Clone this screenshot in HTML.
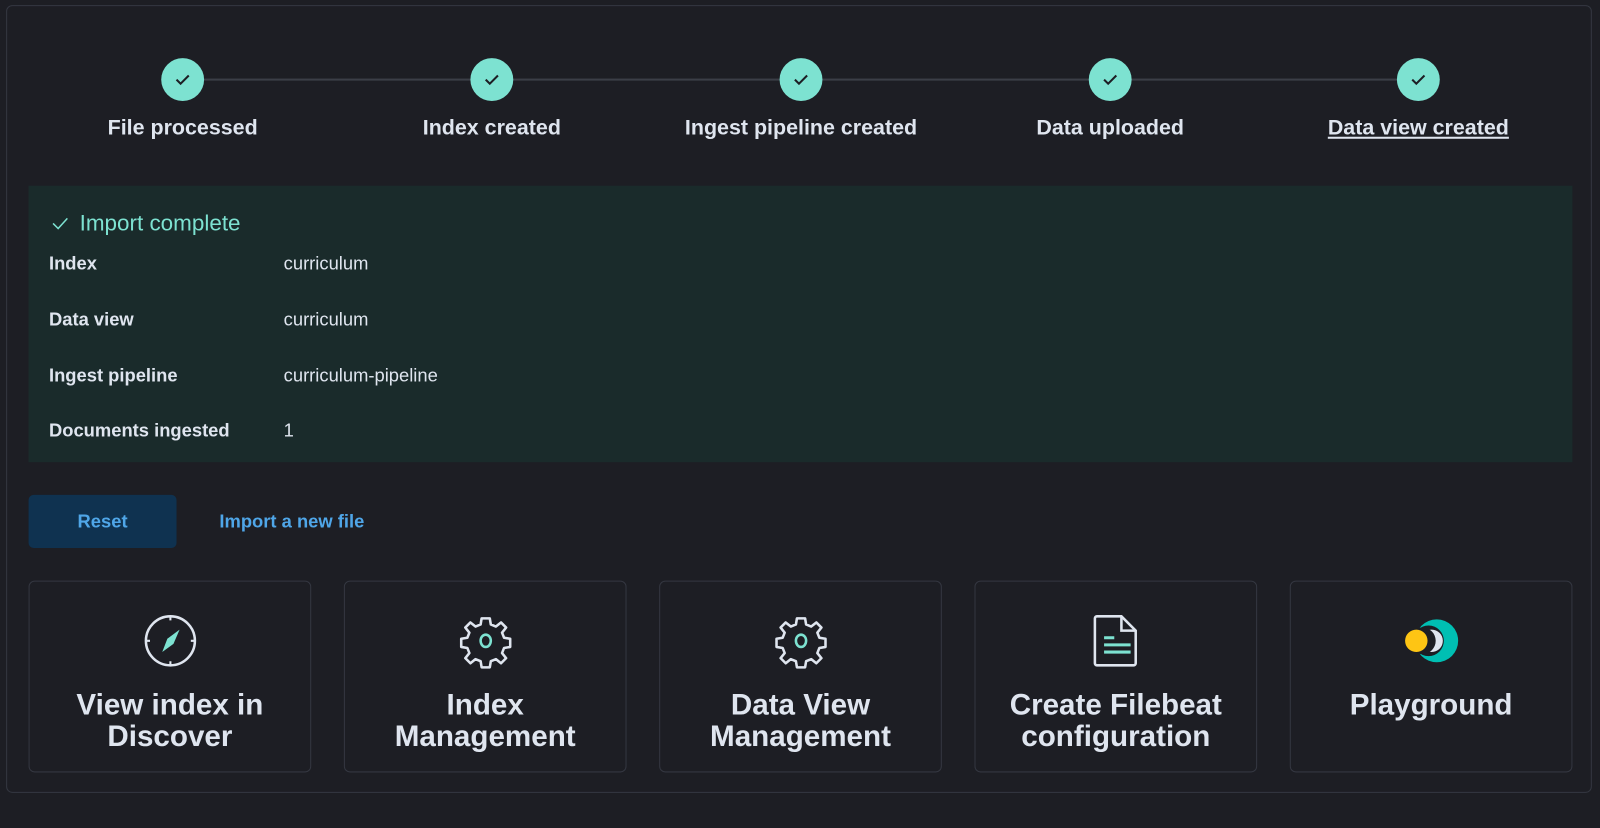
<!DOCTYPE html>
<html><head><style>
body{margin:0;width:1600px;height:828px;background:#1d1e24;font-family:"Liberation Sans",sans-serif;overflow:hidden;position:relative}
#w{position:absolute;left:0;top:0;width:1568px;height:811px;transform:scale(1.0204);transform-origin:0 0}
.panel{position:absolute;left:6px;top:5px;width:1554px;height:772px;border:1px solid #343741;border-radius:6px;box-sizing:border-box}
.line{position:absolute;top:77px;left:179px;width:1211px;height:2px;background:#3b3e47}
.step{position:absolute;top:57px;width:300px;margin-left:-150px;text-align:center}
.circ{width:42px;height:42px;border-radius:50%;background:#7de2d1;margin:0 auto;display:flex;align-items:center;justify-content:center}
.lbl{color:#dfe5ef;font-weight:bold;font-size:21px;margin-top:15px;white-space:nowrap}
.green{position:absolute;left:28px;top:182px;width:1513px;height:271px;background:#1a2b2b}
.title{position:absolute;left:50px;top:206px;color:#7de2d1;font-size:22px}
.row{position:absolute;left:48px;color:#dfe5ef;font-size:18px}
.row b{display:inline-block;width:230px}
.btn{position:absolute;left:28px;top:485px;width:145px;height:52px;background:#0f3250;border-radius:5px;color:#4fa6e8;font-weight:bold;font-size:18px;display:flex;align-items:center;justify-content:center}
.lnk{position:absolute;left:215px;top:501px;color:#4fa6e8;font-weight:bold;font-size:18px}
.card{position:absolute;top:569px;width:277px;height:188px;border:1px solid #343741;border-radius:6px;box-sizing:border-box;text-align:center}
.card svg{position:absolute;left:50%;top:30px;margin-left:-28px}
.ct{position:absolute;top:106px;left:0;right:0;color:#dfe5ef;font-weight:bold;font-size:29px;line-height:31px}
</style></head><body><div id="w">
<div class="panel"></div>
<div class="line"></div>
<div class="step" style="left:179px"><div class="circ"><svg width="16" height="12"><path d="M2 6l4 4 8-8" stroke="#1d1e24" stroke-width="2" fill="none"/></svg></div><div class="lbl">File processed</div></div>
<div class="step" style="left:482px"><div class="circ"><svg width="16" height="12"><path d="M2 6l4 4 8-8" stroke="#1d1e24" stroke-width="2" fill="none"/></svg></div><div class="lbl">Index created</div></div>
<div class="step" style="left:785px"><div class="circ"><svg width="16" height="12"><path d="M2 6l4 4 8-8" stroke="#1d1e24" stroke-width="2" fill="none"/></svg></div><div class="lbl">Ingest pipeline created</div></div>
<div class="step" style="left:1088px"><div class="circ"><svg width="16" height="12"><path d="M2 6l4 4 8-8" stroke="#1d1e24" stroke-width="2" fill="none"/></svg></div><div class="lbl">Data uploaded</div></div>
<div class="step" style="left:1390px"><div class="circ"><svg width="16" height="12"><path d="M2 6l4 4 8-8" stroke="#1d1e24" stroke-width="2" fill="none"/></svg></div><div class="lbl" style="text-decoration:underline">Data view created</div></div>
<div class="green"></div>
<div class="title"><svg width="18" height="14" style="margin-right:10px"><path d="M2 7l5 5 9-10" stroke="#7de2d1" stroke-width="1.5" fill="none"/></svg>Import complete</div>
<div class="row" style="top:248px"><b>Index</b>curriculum</div>
<div class="row" style="top:303px"><b>Data view</b>curriculum</div>
<div class="row" style="top:358px"><b>Ingest pipeline</b>curriculum-pipeline</div>
<div class="row" style="top:412px"><b>Documents ingested</b>1</div>
<div class="btn">Reset</div>
<div class="lnk">Import a new file</div>
<div class="card" style="left:28px"><svg width="56" height="56" viewBox="0 0 56 56"><circle cx="28" cy="28" r="24" stroke="#dfe5ef" stroke-width="2.5" fill="none"/><path d="M28 4v4M28 48v4M4 28h4M48 28h4" stroke="#dfe5ef" stroke-width="2"/><path d="M37 17L31 31 20 39 25 26z" fill="#7de2d1"/></svg><div class="ct">View index in<br>Discover</div></div>
<div class="card" style="left:337px"><svg width="56" height="56" viewBox="0 0 56 56"><path d="M24 6h8l1 6 5 2 5-4 5 5-4 5 2 5 6 1v8l-6 1-2 5 4 5-5 5-5-4-5 2-1 6h-8l-1-6-5-2-5 4-5-5 4-5-2-5-6-1v-8l6-1 2-5-4-5 5-5 5 4 5-2z" stroke="#dfe5ef" stroke-width="2.5" fill="none" stroke-linejoin="round"/><ellipse cx="28" cy="28" rx="5" ry="6" stroke="#7de2d1" stroke-width="2.5" fill="none"/></svg><div class="ct">Index<br>Management</div></div>
<div class="card" style="left:646px"><svg width="56" height="56" viewBox="0 0 56 56"><path d="M24 6h8l1 6 5 2 5-4 5 5-4 5 2 5 6 1v8l-6 1-2 5 4 5-5 5-5-4-5 2-1 6h-8l-1-6-5-2-5 4-5-5 4-5-2-5-6-1v-8l6-1 2-5-4-5 5-5 5 4 5-2z" stroke="#dfe5ef" stroke-width="2.5" fill="none" stroke-linejoin="round"/><ellipse cx="28" cy="28" rx="5" ry="6" stroke="#7de2d1" stroke-width="2.5" fill="none"/></svg><div class="ct">Data View<br>Management</div></div>
<div class="card" style="left:955px"><svg width="56" height="56" viewBox="0 0 56 56"><path d="M9 4h24l14 14v32a2 2 0 0 1-2 2H9a2 2 0 0 1-2-2V6a2 2 0 0 1 2-2z" stroke="#dfe5ef" stroke-width="2.5" fill="none"/><path d="M33 4v14h14" stroke="#dfe5ef" stroke-width="2.5" fill="none"/><path d="M16 25h10M16 32h26M16 39h26" stroke="#7de2d1" stroke-width="3"/></svg><div class="ct">Create Filebeat<br>configuration</div></div>
<div class="card" style="left:1264px"><svg width="56" height="56" viewBox="0 0 56 56"><circle cx="33" cy="28" r="21" fill="#00bfb3"/><circle cx="25" cy="28" r="15" fill="#1d1e24"/><circle cx="28" cy="28" r="11" fill="#dfe5ef"/><circle cx="19" cy="28" r="13" fill="#1d1e24"/><circle cx="13" cy="28" r="11" fill="#fec514"/></svg><div class="ct">Playground</div></div>
</div></body></html>
